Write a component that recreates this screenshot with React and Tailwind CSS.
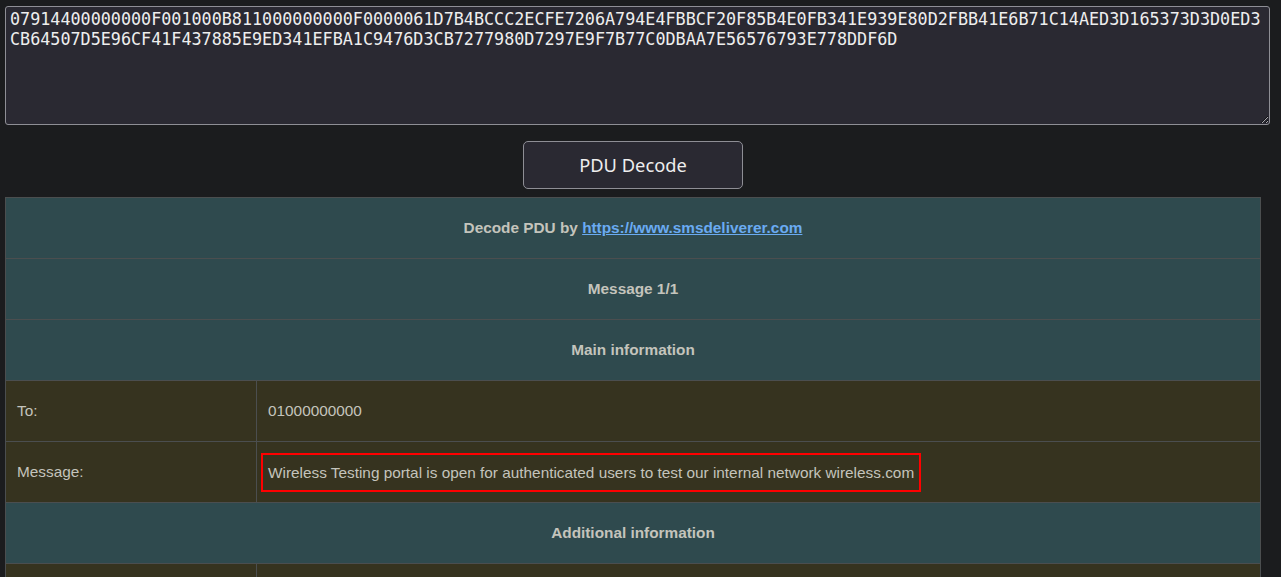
const PDU =
  '07914400000000F001000B811000000000F0000061D7B4BCCC2ECFE7206A794E4FBBCF20F85B4E0FB341E939E80D2FBB41E6B71C14AED3D165373D3D0ED3CB64507D5E96CF41F437885E9ED341EFBA1C9476D3CB7277980D7297E9F7B77C0DBAA7E56576793E778DDF6D';

function HeadRow({ children }) {
  return (
    <tr className="bg-[#2f4a4e]">
      <td colSpan={2} className="h-[61px] border border-[#4b4e4f] text-center font-bold">
        {children}
      </td>
    </tr>
  );
}

function DataRow({ label, children }) {
  return (
    <tr className="bg-[#36331f]">
      <td className="h-[61px] w-[20%] border border-[#4b4e4f] px-[11px]">{label}</td>
      <td className="h-[61px] border border-[#4b4e4f] px-[11px]">{children}</td>
    </tr>
  );
}

export default function App() {
  return (
    <div className="h-[577px] bg-[#1b1c1e] px-[5px] pt-[6px] overflow-hidden">
      <textarea
        defaultValue={PDU}
        spellCheck={false}
        className="block w-[1265px] h-[119px] resize-y rounded-[3px] border border-[#8e8e95] bg-[#2a2932] px-[4px] py-[2px] text-[#eeeeee] text-[16.75px] leading-[20px] outline-none break-all"
        style={{ fontFamily: '"DejaVu Sans Mono", monospace' }}
      />
      <div className="flex w-[1256px] justify-center pt-[16px] pb-[8px]">
        <button className="w-[220px] h-[48px] rounded-[5px] border border-[#8e8e95] bg-[#2a2932] text-[#eeeeee] text-[18.3px] font-['Noto_Sans',sans-serif]">
          PDU Decode
        </button>
      </div>
      <table className="w-[1256px] border-collapse text-[15.35px] text-[#c4c4bc] font-['Liberation_Sans',Arial,sans-serif]">
        <tbody>
          <HeadRow>
            Decode PDU by{' '}
            <a href="#" className="text-[#6aabf2] underline">
              https://www.smsdeliverer.com
            </a>
          </HeadRow>
          <HeadRow>Message 1/1</HeadRow>
          <HeadRow>Main information</HeadRow>
          <DataRow label="To:">01000000000</DataRow>
          <DataRow label="Message:">
            <span className="inline-block -ml-[7px] border-2 border-[#ff0000] px-[5px] py-[9px] leading-[17px]">
              Wireless Testing portal is open for authenticated users to test our internal network wireless.com
            </span>
          </DataRow>
          <HeadRow>Additional information</HeadRow>
          <DataRow label="">&nbsp;</DataRow>
        </tbody>
      </table>
    </div>
  );
}
